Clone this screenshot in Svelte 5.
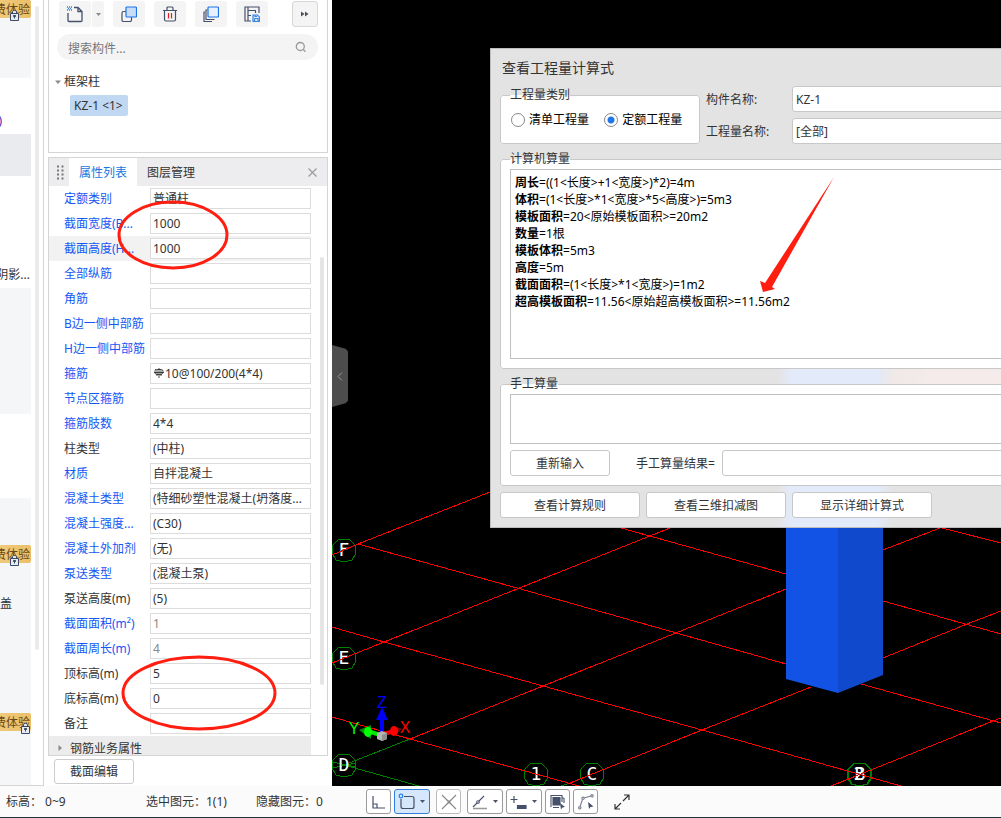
<script lang="ts">
  type Property = { label: string; value: string; tone?: 'blue' | 'plain'; muted?: boolean; active?: boolean; rebar?: boolean }

  const properties: Property[] = [
    { label: '定额类别', value: '普通柱' },
    { label: '截面宽度(B...', value: '1000' },
    { label: '截面高度(H...', value: '1000', active: true },
    { label: '全部纵筋', value: '' },
    { label: '角筋', value: '' },
    { label: 'B边一侧中部筋', value: '' },
    { label: 'H边一侧中部筋', value: '' },
    { label: '箍筋', value: '10@100/200(4*4)', rebar: true },
    { label: '节点区箍筋', value: '' },
    { label: '箍筋肢数', value: '4*4' },
    { label: '柱类型', value: '(中柱)', tone: 'plain' },
    { label: '材质', value: '自拌混凝土' },
    { label: '混凝土类型', value: '(特细砂塑性混凝土(坍落度...' },
    { label: '混凝土强度...', value: '(C30)' },
    { label: '混凝土外加剂', value: '(无)' },
    { label: '泵送类型', value: '(混凝土泵)' },
    { label: '泵送高度(m)', value: '(5)', tone: 'plain' },
    { label: '截面面积(m²)', value: '1', muted: true },
    { label: '截面周长(m)', value: '4', muted: true },
    { label: '顶标高(m)', value: '5', tone: 'plain' },
    { label: '底标高(m)', value: '0', tone: 'plain' },
    { label: '备注', value: '', tone: 'plain' }
  ]

  const formulas = [
    ['周长', '=((1<长度>+1<宽度>)*2)=4m'],
    ['体积', '=(1<长度>*1<宽度>*5<高度>)=5m3'],
    ['模板面积', '=20<原始模板面积>=20m2'],
    ['数量', '=1根'],
    ['模板体积', '=5m3'],
    ['高度', '=5m'],
    ['截面面积', '=(1<长度>*1<宽度>)=1m2'],
    ['超高模板面积', '=11.56<原始超高模板面积>=11.56m2']
  ]

  const axes = [
    { name: 'F', x: 344, y: 550 },
    { name: 'E', x: 344, y: 658 },
    { name: 'D', x: 344, y: 765 },
    { name: '1', x: 536, y: 774 },
    { name: 'C', x: 592, y: 774 },
    { name: '2', x: 859, y: 774 },
    { name: 'B', x: 860, y: 774 }
  ]

  let category = 'quota'
</script>

{#snippet lock()}
  <svg class="lock" width="9" height="11" viewBox="0 0 9 11" aria-hidden="true">
    <path d="M2.5 3.5V1.5Q2.5 .5 4.5 .5T6.5 1.5V3.5M.5 3.5H8.5V10.5H.5Z" fill="#e6ebf2" stroke="#3d4a63" />
    <path d="M3.5 5.5H5.5V6.5H3.5ZM4.5 6.5V8.5" stroke="#3d4a63" />
  </svg>
{/snippet}

{#snippet caret()}
  <svg class="caret" width="7" height="5" viewBox="0 0 7 5" aria-hidden="true"><path d="M1 1H6L3.5 4Z" fill="#4a5568" /></svg>
{/snippet}

<div class="app">
  <div class="main">
    <nav class="strip" aria-label="功能导航">
      <div class="strip-items">
        <div class="block top"><span class="badge">费体验</span>{@render lock()}</div>
        <div class="block gap-a"><span class="cut">)</span></div>
        <div class="block picked"></div>
        <div class="block gap-b"><span class="cut right">阴影...</span></div>
        <div class="block shade"></div>
        <div class="block gap-c"></div>
        <div class="block rest">
          <span class="badge second">费体验</span>
          <span class="word">盖</span>
          <span class="badge third">费体验</span>
          {@render lock()}
          <span class="lock-low">{@render lock()}</span>
        </div>
      </div>
      <div class="strip-bar"></div>
    </nav>

    <aside class="side">
      <section class="components">
        <div class="tools">
          <button type="button" class="tool new" aria-label="新建">
            <svg width="18" height="18" viewBox="0 0 18 18" fill="none" stroke="#46506a" stroke-width="1.3">
              <path d="M8 2.5H12L16 6.5V15.5Q16 16.5 15 16.5H3Q2 16.5 2 15.5V8M12 2.5V6.5H16" />
              <path d="M1 2H2M3 2H4M5 2H6M2 3.5H3M4 3.5H5M1 5H2M3 5H4M5 5H6" stroke="#2f7fe0" stroke-width="1.5" />
            </svg>
          </button>
          <button type="button" class="tool drop" aria-label="新建选项"><svg width="7" height="5" viewBox="0 0 7 5"><path d="M1 1H6L3.5 4Z" fill="#888" /></svg></button>
          <button type="button" class="tool" aria-label="复制">
            <svg width="16" height="16" viewBox="0 0 16 16" fill="none" stroke="#46506a" stroke-width="1.2">
              <path d="M5 5.5H2.5Q1 5.5 1 7V14Q1 15.5 2.5 15.5H9Q10.5 15.5 10.5 14V11" />
              <rect x="5" y="1" width="10.5" height="10" rx="1" fill="#c9dcf6" stroke="#1a73e8" />
            </svg>
          </button>
          <button type="button" class="tool" aria-label="删除">
            <svg width="16" height="16" viewBox="0 0 16 16" fill="none" stroke="#46506a" stroke-width="1.2">
              <path d="M1 4.5H15M5 4V2Q5 1 6 1H10Q11 1 11 2V4M2.5 4.5V13.5Q2.5 15 4 15H12Q13.5 15 13.5 13.5V4.5" />
              <path d="M6.5 7V12.5M9.5 7V12.5" stroke="#e02020" />
            </svg>
          </button>
          <button type="button" class="tool" aria-label="层间复制">
            <svg width="16" height="16" viewBox="0 0 16 16" fill="none" stroke="#46506a" stroke-width="1.2">
              <path d="M2 6H1V15.5H9M4.5 4H3V13.5H11.5" />
              <rect x="5" y="1" width="10.5" height="10" rx="1" fill="#e6f1fd" stroke="#1a73e8" />
            </svg>
          </button>
          <button type="button" class="tool" aria-label="存档">
            <svg width="16" height="16" viewBox="0 0 16 16" fill="none" stroke="#46506a" stroke-width="1.2">
              <path d="M15 7V1H1V15H7M4 1V15M4 4.5H12M11.5 4.5V7M4 9.5H7" />
              <path d="M9 9H13.5L15.5 11V15.5H9Z" fill="#d9e8fb" stroke="#3b86e0" />
              <path d="M10.5 12.5H14V15.5M10.5 12.5V15.5M11 9V10.5H13" stroke="#3b86e0" />
            </svg>
          </button>
          <button type="button" class="tool more" aria-label="更多"><svg width="8" height="6" viewBox="0 0 8 6"><path d="M0 .5L3.5 3L0 5.5ZM4 .5L7.5 3L4 5.5Z" fill="#4a4f5c" /></svg></button>
        </div>
        <div class="search">
          <input type="text" placeholder="搜索构件..." aria-label="搜索构件" />
          <svg width="12" height="12" viewBox="0 0 12 12" fill="none" stroke="#999" stroke-width="1.3"><circle cx="5.3" cy="5.5" r="4" /><path d="M8.2 8.4L10.5 10.7" /></svg>
        </div>
        <div class="tree">
          <div class="branch">
            <svg width="7" height="5" viewBox="0 0 7 5"><path d="M0 .5H6L3 4Z" fill="#8a8a8a" /></svg>
            框架柱
          </div>
          <button type="button" class="leaf">KZ-1 &lt;1&gt;</button>
        </div>
      </section>

      <section class="props">
        <header class="tabs">
          <span class="grip"><svg width="7" height="15" viewBox="0 0 7 15"><path d="M1 .5V15M5.5 .5V15" stroke="#777" stroke-width="2" stroke-dasharray="2 2" /></svg></span>
          <button type="button" class="tab current">属性列表</button>
          <button type="button" class="tab">图层管理</button>
          <button type="button" class="close" aria-label="关闭"><svg width="9" height="9" viewBox="0 0 9 9"><path d="M.5 .5L8.5 8.5M8.5 .5L.5 8.5" stroke="#999" stroke-width="1.1" /></svg></button>
        </header>
        <div class="list">
          <div class="rows">
            {#each properties as item, i}
              <div class="row" class:active={item.active}>
                <label for="prop-{i}" class:plain={item.tone === 'plain'}>{item.label}</label>
                <span class="field">
                  {#if item.rebar}
                    <svg width="12" height="13" viewBox="0 0 12 13" fill="none" stroke="#222"><path d="M6 1V11M3.5 2.5H8.5Q10 2.5 10 4.5T8.5 7.5H3.5Q2 7.5 2 4.5T3.5 2.5M1 5.5H11M4 3V9M8 3V9" stroke-width=".8" /></svg>
                  {/if}
                  <input id="prop-{i}" type="text" value={item.value} class:muted={item.muted} />
                </span>
              </div>
            {/each}
            <div class="group">
              <svg width="5" height="7" viewBox="0 0 5 7"><path d="M.5 0L4 3L.5 6Z" fill="#888" /></svg>
              钢筋业务属性
            </div>
          </div>
          <div class="track"><div class="thumb"></div></div>
        </div>
      </section>
      <button type="button" class="edit">截面编辑</button>
    </aside>

    <main class="viewport">
      <svg class="scene" viewBox="332 0 669 786" preserveAspectRatio="xMinYMin slice">
        <g fill="none" stroke="#008000" shape-rendering="crispEdges">
          <path d="M344 765L410 739M344 765L419 786M332 762L356 767M332 768L356 763M561 786L570 783" />
          {#each axes as axis}
            <path d="M-5 -11L5 -11L11 -5L12 3L8 10L0 12L-8 10L-12 3L-11 -5Z" transform="translate({axis.x} {axis.y})" />
          {/each}
        </g>
        <g class="axis-names">
          {#each axes as axis}
            <text x={axis.x} y={axis.y + 6}>{axis.name}</text>
          {/each}
        </g>
        <path
          d="M332 555L358 544L490 492M332 663L384 642L670 528M410 739L543 686L786 589M883 550L940 528M570 783L702 730L811 687M883 658L967 624L1001 611M831 786L993 721L1001 718M358 544L517 588L786 664M861 684L1001 723M621 528L786 574M883 601L1001 634M332 627L384 642L543 686L702 730L901 786M332 717L410 739L579 786M942 528L1001 543"
          fill="none"
          stroke="#ff0000"
          shape-rendering="crispEdges"
        />
        <path d="M786 500H838V693L786 679Z" fill="#1253e6" />
        <path d="M838 500H883V675L838 693Z" fill="#1149cc" />
        <g>
          <path d="M382 733V716" stroke="#0000ff" stroke-width="4" />
          <path d="M382 707L388 720H376Z" fill="#0000f0" />
          <path d="M380 735L368 731" stroke="#00e800" stroke-width="4" />
          <path d="M359 730L371 725V739Z" fill="#009600" />
          <ellipse cx="368" cy="732" rx="4" ry="5" fill="#00ff00" />
          <path d="M384 734L394 731" stroke="#f00000" stroke-width="4" />
          <path d="M402 729L393 726V736Z" fill="#8c0000" />
          <ellipse cx="394" cy="731" rx="4" ry="5" fill="#ff0000" />
          <path d="M377 733L382 731L387 733V739L382 741L377 739Z" fill="#b4b4b4" />
          <path d="M382 735L387 733V739L382 741Z" fill="#909090" />
        </g>
        <g class="gizmo">
          <text x="382" y="708" fill="#0000ff">Z</text>
          <text x="354" y="734" fill="#00ff00">Y</text>
          <text x="405" y="733" fill="#ff0000">X</text>
        </g>
      </svg>
      <button type="button" class="collapse" aria-label="收起面板"><svg width="6" height="9" viewBox="0 0 6 9"><path d="M5 .5L1 4.5L5 8.5" fill="none" stroke="#999" /></svg></button>

      <section class="dialog" role="dialog" aria-label="查看工程量计算式">
        <h2>查看工程量计算式</h2>
        <div class="head">
          <fieldset class="category">
            <legend>工程量类别</legend>
            <label><input type="radio" bind:group={category} value="bill" />清单工程量</label>
            <label><input type="radio" bind:group={category} value="quota" />定额工程量</label>
          </fieldset>
          <div class="names">
            <label for="component">构件名称:</label>
            <select id="component"><option>KZ-1</option></select>
            <label for="quantity">工程量名称:</label>
            <select id="quantity"><option>[全部]</option></select>
          </div>
        </div>
        <fieldset>
          <legend>计算机算量</legend>
          <div class="result">
            {#each formulas as [name, body]}
              <p><b>{name}</b>{body}</p>
            {/each}
          </div>
        </fieldset>
        <fieldset>
          <legend>手工算量</legend>
          <textarea aria-label="手工算量"></textarea>
          <div class="manual">
            <button type="button">重新输入</button>
            <label for="manual">手工算量结果=</label>
            <input id="manual" type="text" />
          </div>
        </fieldset>
        <footer>
          <button type="button">查看计算规则</button>
          <button type="button">查看三维扣减图</button>
          <button type="button">显示详细计算式</button>
        </footer>
      </section>
    </main>
  </div>

  <footer class="status">
    <span class="level">标高： 0~9</span>
    <span class="selected">选中图元：1(1)</span>
    <span class="hidden">隐藏图元：0</span>
    <div class="snaps">
      <button type="button" aria-label="正交"><svg width="16" height="16" viewBox="0 0 16 16" fill="none" stroke="#46506a" stroke-width="1.2"><path d="M2 2V14H14M2 10H6V14" /></svg></button>
      <button type="button" class="wide on" aria-label="框选">
        <svg width="18" height="18" viewBox="0 0 18 18" fill="none" stroke="#46506a" stroke-width="1.2"><path d="M6 3.5H14Q16 3.5 16 5.5V13.5Q16 15.5 14 15.5H5Q3 15.5 3 13.5V6" /><circle cx="3" cy="3" r="1.8" stroke="#2080e8" /></svg>
        {@render caret()}
      </button>
      <button type="button" class="off" aria-label="交点"><svg width="16" height="16" viewBox="0 0 16 16" fill="none" stroke="#888" stroke-width="1.1"><path d="M1 1L6.5 6.5M9.5 9.5L15 15M15 1L9.5 6.5M6.5 9.5L1 15" /><path d="M6.5 6.5L8 7.3L9.5 6.5L8.7 8L9.5 9.5L8 8.7L6.5 9.5L7.3 8Z" /></svg></button>
      <button type="button" class="wide" aria-label="角度">
        <svg width="18" height="16" viewBox="0 0 18 16" fill="none" stroke="#46506a" stroke-width="1.1"><path d="M2 13L6 9M8 7L13 2" /><circle cx="7" cy="8" r="1.3" /><path d="M2 14.5H16" stroke="#999" stroke-width="1.5" /></svg>
        {@render caret()}
      </button>
      <button type="button" class="wide" aria-label="偏移">
        <svg width="18" height="16" viewBox="0 0 18 16" fill="none" stroke="#46506a" stroke-width="1.2"><path d="M4 2V9M.5 5.5H7.5" /><path d="M7.5 11.5H16V14.5H7.5Z" fill="#46506a" /></svg>
        {@render caret()}
      </button>
      <button type="button" aria-label="图层选择"><svg width="16" height="16" viewBox="0 0 16 16" fill="none" stroke="#46506a" stroke-width="1.1"><path d="M3 3.5H10V11H3Z" fill="#46506a" /><path d="M1 13V1.5H12V8M3 13.5H9M14 4V9M12 4H14" /><path d="M10 9L15 13L12.5 13.5L11 15.5Z" fill="#46506a" stroke="none" /></svg></button>
      <button type="button" aria-label="折线选择"><svg width="16" height="16" viewBox="0 0 16 16" fill="none" stroke="#777e8c" stroke-width="1.1"><path d="M2 12.5L4.5 5.5M6 4L13 2" /><circle cx="1.8" cy="13.8" r="1.2" /><circle cx="5" cy="4.3" r="1.2" /><circle cx="14" cy="1.8" r="1.2" /><path d="M10 8L15.5 12.5L12.5 13L11 15Z" fill="#46506a" stroke="none" /></svg></button>
      <button type="button" class="expand" aria-label="全屏"><svg width="16" height="16" viewBox="0 0 16 16" fill="none" stroke="#333" stroke-width="1.2"><path d="M9 7L15 1M10 1H15V6M7 9L1 15M1 10V15H6" /></svg></button>
    </div>
  </footer>

  <!-- red review marks drawn over the panels -->
  <svg class="marks" width="1001" height="818" viewBox="0 0 1001 818" aria-hidden="true">
    <ellipse cx="173" cy="235" rx="54" ry="33" />
    <ellipse cx="199" cy="693" rx="76" ry="36" />
    <path d="M834 177L765 283L760 281L763 292L775 289L772 287Z" />
  </svg>
</div>

<style>
  :global(body) {
    margin: 0;
  }

  .app {
    position: relative;
    display: flex;
    flex-direction: column;
    min-height: 100vh;
    overflow: hidden;
    background: #fff;
    color: #333;
    font-family: 'Noto Sans', 'Noto Sans CJK SC', sans-serif;
    font-size: 12px;
    line-height: 18px;
  }

  .app *,
  .app {
    box-sizing: border-box;
  }

  button,
  input,
  select,
  textarea {
    margin: 0;
    padding: 0;
    border: 0;
    background: none;
    color: inherit;
    font: inherit;
    outline: none;
  }

  svg {
    display: block;
    flex: none;
  }

  .main {
    display: flex;
    flex: 1;
  }

  /* left navigation, scrolled mostly out of view */
  .strip {
    display: flex;
    flex: none;
    width: 44px;
    border-right: 1px solid #d5d5d5;
    border-bottom: 1px solid #d5d5d5;
  }

  .strip-items {
    display: flex;
    flex-direction: column;
    width: 31px;
    overflow: hidden;
  }

  .block {
    position: relative;
    flex: none;
  }

  .top {
    height: 78px;
    background: #f5f6f8;
  }

  .gap-a {
    height: 56px;
    padding-top: 34px;
  }

  .picked {
    height: 42px;
    background: #eaebef;
  }

  .gap-b {
    height: 112px;
    padding-top: 90px;
  }

  .shade {
    height: 126px;
    background: #f5f6f8;
  }

  .gap-c {
    height: 84px;
  }

  .rest {
    flex: 1;
    padding-top: 97px;
    background: #f5f6f8;
  }

  .cut {
    display: flex;
    justify-content: flex-end;
    width: 2px;
    color: #5424b8;
    white-space: nowrap;
  }

  .cut.right {
    width: 30px;
    color: #333;
  }

  .word {
    display: block;
  }

  .badge {
    position: absolute;
    top: 0;
    right: 0;
    display: flex;
    justify-content: flex-end;
    width: 60px;
    height: 18px;
    padding-right: 1px;
    border-radius: 2px;
    background: linear-gradient(90deg, #f3d18c, #ebbf68);
    color: #6b4a12;
    line-height: 20px;
    white-space: nowrap;
  }

  .second {
    top: 47px;
  }

  .third {
    top: 215px;
  }

  .lock {
    position: absolute;
    top: 10px;
    left: 10px;
  }

  .rest .lock {
    top: 57px;
  }

  .rest .lock-low .lock {
    top: 225px;
    left: 21px;
  }

  .strip-bar {
    width: 4px;
    height: 644px;
    margin: 6px 0 0 4px;
    border-radius: 2px;
    background: #ebebeb;
  }

  .side {
    display: flex;
    flex: none;
    flex-direction: column;
    width: 288px;
    padding: 0 4px 2px;
  }

  .components {
    height: 153px;
    padding: 1px 9px 0 8px;
    border: 1px solid #d5d5d5;
    border-top: 0;
  }

  .tools {
    display: flex;
    gap: 9px;
    padding-left: 2px;
  }

  .tool {
    display: flex;
    align-items: center;
    justify-content: center;
    width: 32px;
    height: 26px;
    border-radius: 3px;
    background: #f4f4f4;
  }

  .tool.drop {
    width: 12px;
    margin-left: -8px;
  }

  .tool.more {
    width: 26px;
    margin-left: auto;
    border: 1px solid #d8d8d8;
  }

  .search {
    display: flex;
    align-items: center;
    height: 26px;
    margin-top: 7px;
    padding: 0 11px;
    border-radius: 13px;
    background: #f4f4f4;
  }

  .search input {
    flex: 1;
    min-width: 0;
    height: 20px;
    padding-top: 2px;
  }

  .search input::placeholder {
    color: #777;
    opacity: 1;
  }

  .tree {
    padding-top: 13px;
  }

  .branch {
    display: flex;
    align-items: center;
    gap: 2px;
    margin-left: -2px;
  }

  .leaf {
    height: 21px;
    margin: 4px 0 0 13px;
    padding: 0 5px 0 4px;
    border-radius: 2px;
    background: #c0d8f2;
    word-spacing: normal;
  }

  .props {
    margin-top: 4px;
    border: 1px solid #d5d5d5;
  }

  .tabs {
    display: flex;
    align-items: center;
    height: 28px;
    background: #ededef;
  }

  .grip {
    width: 20px;
    padding-left: 8px;
  }

  .tab {
    height: 28px;
    padding: 2px 10px 0;
  }

  .tab.current {
    background: #fff;
    color: #1677e0;
  }

  .close {
    margin: 0 10px 0 auto;
  }

  .list {
    display: flex;
    justify-content: space-between;
  }

  .rows {
    width: 262px;
  }

  .row {
    display: flex;
    align-items: center;
    height: 25px;
    padding-left: 15px;
  }

  .row.active {
    background: #f2f2f2;
  }

  .row label {
    width: 86px;
    color: #1557f5;
    white-space: nowrap;
  }

  .row label.plain {
    color: #333;
  }

  .field {
    display: flex;
    flex: 1;
    align-items: center;
    min-width: 0;
    height: 21px;
    padding-left: 2px;
    border: 1px solid #dcdcdc;
    background: #fff;
  }

  .field input {
    width: 100%;
    min-width: 0;
    height: 18px;
  }

  .field .muted {
    color: #888;
  }

  .group {
    display: flex;
    align-items: center;
    gap: 7px;
    height: 19px;
    padding: 6px 0 0 9px;
    overflow: hidden;
    background: #ececec;
  }

  .track {
    width: 4px;
    margin-right: 3px;
    padding-top: 71px;
  }

  .thumb {
    height: 428px;
    border-radius: 2px;
    background: #e5e5e5;
  }

  .edit {
    width: 80px;
    height: 25px;
    margin: 3px 0 0 6px;
    border: 1px solid #ccc;
    border-radius: 3px;
  }

  .viewport {
    position: relative;
    flex: 1;
    min-width: 0;
    overflow: hidden;
    background: #000;
  }

  .scene {
    position: absolute;
    width: 100%;
    height: 100%;
  }

  .axis-names {
    fill: #fff;
    font-family: 'DejaVu Sans Mono', monospace;
    font-size: 18px;
    text-anchor: middle;
  }

  .gizmo {
    font-family: 'Liberation Sans', sans-serif;
    font-size: 16px;
    text-anchor: middle;
  }

  .collapse {
    position: absolute;
    top: 345px;
    left: 0;
    display: flex;
    align-items: center;
    justify-content: center;
    width: 16px;
    height: 62px;
    background: #4d4d4d;
    clip-path: polygon(0 0, 85% 6%, 100% 10%, 100% 90%, 85% 94%, 0 100%);
  }

  .dialog {
    position: absolute;
    top: 48px;
    right: -200px;
    left: 158px;
    display: flex;
    flex-direction: column;
    gap: 6px;
    padding: 9px;
    border: 1px solid #bdbdbd;
    background:
      linear-gradient(90deg, transparent 286px, #e3eaf9 300px, #e3eaf9 386px, transparent 402px) 0 100% / 100% 160px no-repeat,
      linear-gradient(90deg, transparent 300px, #f4ebea 440px) 0 320px / 100% 16px no-repeat,
      #e3e3e3;
  }

  .dialog h2 {
    margin: 0 0 2px;
    padding-left: 2px;
    font-size: 14px;
    font-weight: 400;
    line-height: 20px;
  }

  fieldset {
    min-width: 0;
    margin: 0;
    padding: 1px 9px 9px;
    border: 1px solid #c8c8c8;
    border-radius: 3px;
    background: #fff;
  }

  legend {
    height: 18px;
    padding: 0;
  }

  .head {
    display: flex;
    gap: 6px;
  }

  .category {
    flex: none;
    width: 200px;
    height: 58px;
    padding-left: 10px;
  }

  .category legend {
    margin-left: -1px;
  }

  .category label {
    display: inline-flex;
    align-items: center;
    gap: 4px;
    margin: 6px 12px 0 0;
    color: #000;
  }

  .category label + label {
    margin-right: 0;
  }

  .category input {
    width: 14px;
    height: 14px;
    border: 1px solid #888;
    border-radius: 50%;
    appearance: none;
  }

  .category input:checked {
    background: radial-gradient(circle, #2078e8 3px, #fff 4px);
  }

  .names {
    display: grid;
    flex: 1;
    grid-template-columns: 86px 1fr;
    gap: 6px 0;
    align-items: center;
  }

  .names label {
    padding-top: 2px;
  }

  .names select {
    height: 26px;
    padding: 1px 3px 0;
    border: 1px solid #c8c8c8;
    border-radius: 3px;
    background: #fff;
    appearance: none;
  }

  .result {
    height: 190px;
    padding: 4px;
    border: 1px solid #c0c0c0;
    color: #000;
  }

  .result p {
    margin: 0;
    line-height: 17px;
    white-space: nowrap;
  }

  textarea {
    display: block;
    width: 100%;
    height: 50px;
    border: 1px solid #c0c0c0;
    resize: none;
  }

  .manual {
    display: flex;
    align-items: center;
    margin-top: 6px;
  }

  .manual button {
    width: 100px;
  }

  .manual label {
    width: 112px;
    padding: 2px 0 0 26px;
    white-space: nowrap;
  }

  .manual button,
  .manual input,
  .dialog footer button {
    height: 26px;
    padding-top: 2px;
    border: 1px solid #c8c8c8;
    border-radius: 3px;
    background: #fff;
  }

  .manual input {
    flex: 1;
  }

  .dialog footer {
    display: flex;
    gap: 6px;
  }

  .dialog footer button {
    width: 140px;
  }

  .status {
    display: flex;
    align-items: center;
    height: 32px;
    padding-left: 6px;
    border-bottom: 1px solid #1f3338;
    background: #fbfbfb;
    white-space: nowrap;
  }

  .level {
    width: 140px;
  }

  .selected,
  .hidden {
    width: 110px;
  }

  .snaps {
    display: flex;
    gap: 3px;
  }

  .snaps button {
    display: flex;
    align-items: center;
    justify-content: center;
    width: 25px;
    height: 25px;
    border: 1px solid #9a9a9a;
    border-radius: 3px;
    background: #fff;
  }

  .snaps .wide {
    gap: 3px;
    width: 36px;
  }

  .snaps .on {
    border-color: #2f7fe0;
    background: #d6e6fb;
  }

  .snaps .off {
    margin: 0 3px;
    border-color: #bbb;
  }

  .snaps .expand {
    margin-left: 8px;
    border: 0;
    background: none;
  }

  .marks {
    position: absolute;
    top: 0;
    left: 0;
    pointer-events: none;
  }

  .marks ellipse {
    fill: none;
    stroke: #ff1e10;
    stroke-width: 3;
  }

  .marks path {
    fill: #ff1e10;
  }
</style>
